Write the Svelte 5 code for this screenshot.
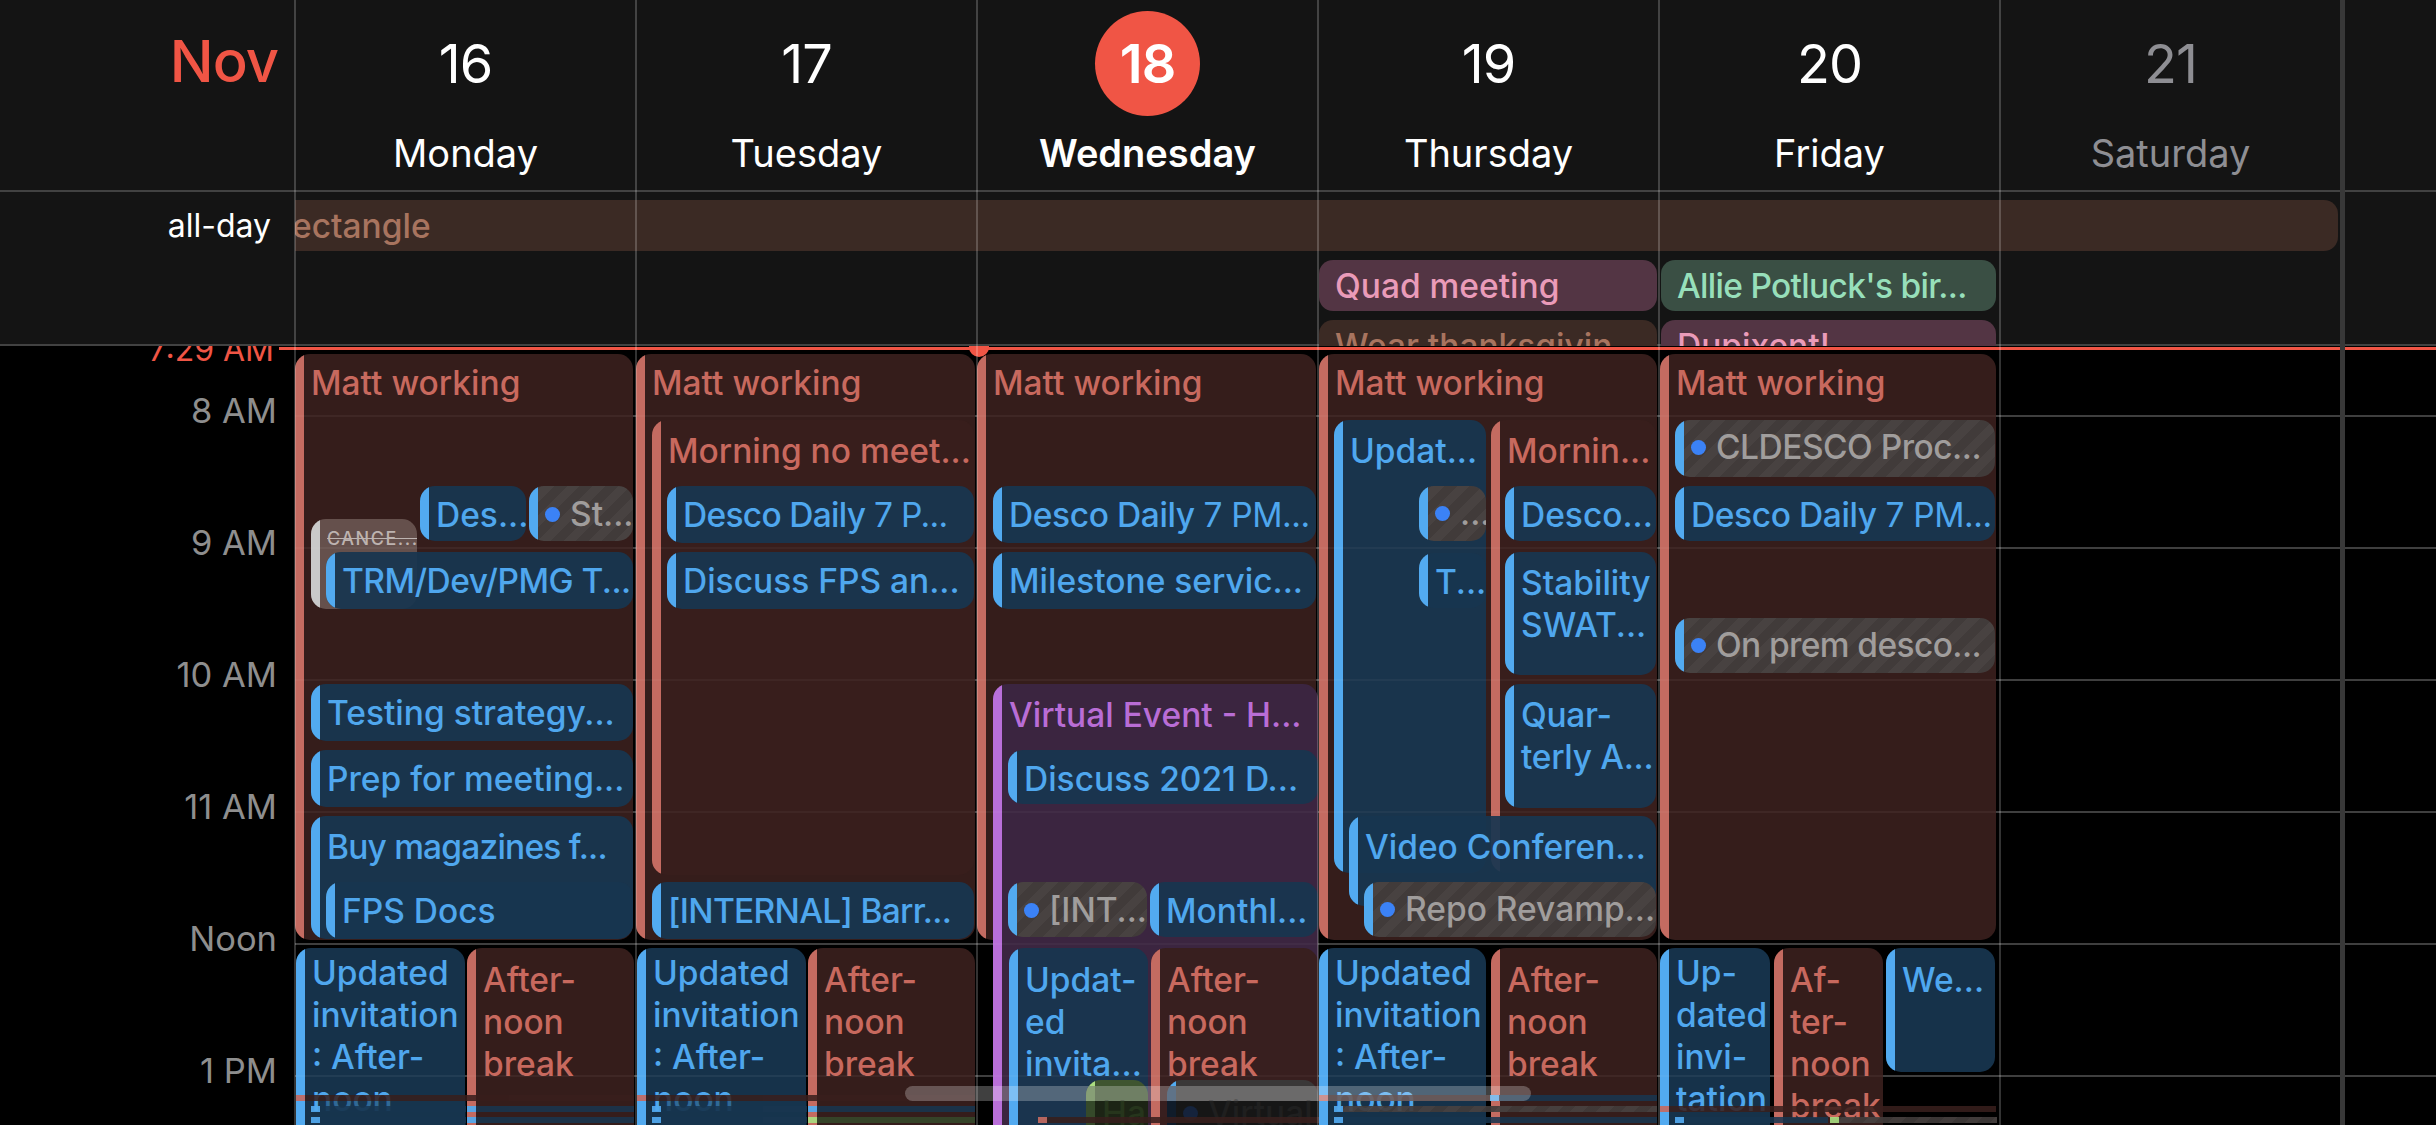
<script>
	const days = [
		{ num: 16, name: "Monday" },
		{ num: 17, name: "Tuesday" },
		{ num: 18, name: "Wednesday", today: true },
		{ num: 19, name: "Thursday" },
		{ num: 20, name: "Friday" },
		{ num: 21, name: "Saturday", off: true },
	]

	const hours = ["8 AM", "9 AM", "10 AM", "11 AM", "Noon", "1 PM"]

	// x, y, right edge, bottom edge are screen pixels; top of the scroller is 346
	const events = [
		// Monday
		{ c: "red", x: 295, y: 354, r: 633, b: 940, t: "Matt working", p: 8 },
		{ c: "blue", x: 420, y: 486, r: 526, b: 541, t: "Des..." },
		{ c: "gray", x: 529, y: 486, r: 633, b: 541, t: "St...", p: 7 },
		{ c: "cancelled", x: 311, y: 519, r: 417, b: 609, t: "CANCE..." },
		{ c: "blue", x: 326, y: 552, r: 633, b: 609, t: "TRM/Dev/PMG T...", ls: -0.5 },
		{ c: "blue", x: 311, y: 684, r: 633, b: 741, t: "Testing strategy..." },
		{ c: "blue", x: 311, y: 750, r: 633, b: 807, t: "Prep for meeting..." },
		{ c: "blue", x: 311, y: 816, r: 633, b: 939, t: "Buy magazines f...", p: 10, ls: -0.8 },
		{ c: "blue", x: 326, y: 882, r: 633, b: 939, t: "FPS Docs" },
		{ c: "blue", x: 296, y: 948, r: 465, b: 1160, t: "Updated\ninvitation\n: After-\nnoon", p: 4 },
		{ c: "red", x: 467, y: 948, r: 634, b: 1160, t: "After-\nnoon\nbreak", p: 11 },

		// Tuesday
		{ c: "red", x: 636, y: 354, r: 975, b: 940, t: "Matt working", p: 8 },
		{ c: "red", x: 652, y: 420, r: 974, b: 875, t: "Morning no meet...", p: 10 },
		{ c: "blue", x: 667, y: 486, r: 974, b: 543, t: "Desco Daily", sub: " 7 P...", ls: -0.7 },
		{ c: "blue", x: 667, y: 552, r: 974, b: 609, t: "Discuss FPS an..." },
		{ c: "blue", x: 652, y: 882, r: 974, b: 939, t: "[INTERNAL] Barr...", ls: -0.7 },
		{ c: "blue", x: 637, y: 948, r: 806, b: 1160, t: "Updated\ninvitation\n: After-\nnoon", p: 4 },
		{ c: "red", x: 808, y: 948, r: 975, b: 1160, t: "After-\nnoon\nbreak", p: 11 },

		// Wednesday
		{ c: "red", x: 977, y: 354, r: 1316, b: 940, t: "Matt working", p: 8 },
		{ c: "blue", x: 993, y: 486, r: 1316, b: 543, t: "Desco Daily", sub: " 7 PM...", ls: -0.4 },
		{ c: "blue", x: 993, y: 552, r: 1316, b: 609, t: "Milestone servic..." },
		{ c: "purple", x: 993, y: 684, r: 1318, b: 1160, t: "Virtual Event - H...", p: 10 },
		{ c: "blue", x: 1008, y: 750, r: 1318, b: 804, t: "Discuss 2021 D..." },
		{ c: "gray", x: 1008, y: 882, r: 1147, b: 937, t: "[INT...", p: 7 },
		{ c: "blue", x: 1150, y: 882, r: 1318, b: 937, t: "Monthl..." },
		{ c: "blue", x: 1009, y: 948, r: 1148, b: 1160, t: "Updat-\ned\ninvita...", p: 11 },
		{ c: "red", x: 1151, y: 948, r: 1318, b: 1160, t: "After-\nnoon\nbreak", p: 11 },
		{ c: "dimgreen", x: 1086, y: 1080, r: 1148, b: 1160, t: "Ha", p: 12 },
		{ c: "dimgray", x: 1167, y: 1080, r: 1318, b: 1160, t: "Virtual", p: 12 },

		// Thursday
		{ c: "red", x: 1319, y: 354, r: 1657, b: 940, t: "Matt working", p: 8 },
		{ c: "blue", x: 1334, y: 420, r: 1486, b: 873, t: "Updat...", p: 10 },
		{ c: "gray", x: 1419, y: 486, r: 1486, b: 541, t: "..." },
		{ c: "blue", x: 1419, y: 553, r: 1486, b: 608, t: "T..." },
		{ c: "red", x: 1491, y: 420, r: 1656, b: 873, t: "Mornin...", p: 10 },
		{ c: "blue", x: 1505, y: 486, r: 1656, b: 541, t: "Desco..." },
		{ c: "blue", x: 1505, y: 552, r: 1656, b: 675, t: "Stability\nSWAT...", p: 10 },
		{ c: "blue", x: 1505, y: 684, r: 1656, b: 808, t: "Quar-\nterly A...", p: 10, ls: -0.3 },
		{ c: "blue", x: 1349, y: 816, r: 1656, b: 906, t: "Video Conferen...", p: 10 },
		{ c: "gray", x: 1364, y: 882, r: 1656, b: 937, t: "Repo Revamp..." },
		{ c: "blue", x: 1319, y: 948, r: 1486, b: 1160, t: "Updated\ninvitation\n: After-\nnoon", p: 4 },
		{ c: "red", x: 1491, y: 948, r: 1657, b: 1160, t: "After-\nnoon\nbreak", p: 11 },

		// Friday
		{ c: "red", x: 1660, y: 354, r: 1996, b: 940, t: "Matt working", p: 8 },
		{ c: "gray", x: 1675, y: 420, r: 1995, b: 477, t: "CLDESCO Proc...", ls: -0.5 },
		{ c: "blue", x: 1675, y: 486, r: 1995, b: 541, t: "Desco Daily", sub: " 7 PM...", ls: -0.4 },
		{ c: "gray", x: 1675, y: 618, r: 1995, b: 673, t: "On prem desco...", ls: -0.6 },
		{ c: "blue", x: 1660, y: 948, r: 1770, b: 1160, t: "Up-\ndated\ninvi-\ntation", p: 4 },
		{ c: "red", x: 1774, y: 948, r: 1883, b: 1160, t: "Af-\nter-\nnoon\nbreak", p: 11 },
		{ c: "blue", x: 1886, y: 948, r: 1995, b: 1072, t: "We...", p: 11 },
	]

	// thin slivers of the events stacked further down, peeking under the fold
	const slivers = [
		{ c: "blue", x: 320, y: 1101, r: 466, b: 1125, veil: true },
		{ c: "blue", x: 661, y: 1101, r: 807, b: 1125, veil: true },
		{ c: "red", x: 296, y: 1095, r: 634 },
		{ c: "blue", x: 311, y: 1106, r: 466 },
		{ c: "blue", x: 467, y: 1106, r: 634 },
		{ c: "blue", x: 311, y: 1117, r: 466 },
		{ c: "blue", x: 467, y: 1117, r: 634 },
		{ c: "red", x: 637, y: 1095, r: 975 },
		{ c: "blue", x: 652, y: 1106, r: 807 },
		{ c: "blue", x: 808, y: 1106, r: 975 },
		{ c: "blue", x: 652, y: 1117, r: 807 },
		{ c: "lime", x: 808, y: 1117, r: 975 },
		{ c: "red", x: 1038, y: 1117, r: 1319 },
		{ c: "red", x: 1319, y: 1095, r: 1490 },
		{ c: "blue", x: 1490, y: 1095, r: 1657 },
		{ c: "gray", x: 1334, y: 1106, r: 1657 },
		{ c: "blue", x: 1334, y: 1117, r: 1657 },
		{ c: "red", x: 1660, y: 1106, r: 1996 },
		{ c: "blue", x: 1675, y: 1117, r: 1828 },
		{ c: "lime-gray", x: 1830, y: 1117, r: 1997 },
	]

	const place = (e) =>
		`left:${e.x}px;top:${e.y - 346}px;width:${e.r - e.x}px;height:${(e.b ?? e.y + 6) - e.y}px`
</script>

<div class="cal">
	<header class="head">
		<div class="month">Nov</div>
		{#each days as d}
			<div class="day" class:off={d.off} class:today={d.today}>
				<div class="num"><span>{d.num}</span></div>
				<div class="name">{d.name}</div>
			</div>
		{/each}
	</header>

	<section class="allday">
		<div class="allday-label">all-day</div>
		<div class="pill rect"><span>ectangle</span></div>
		<div class="pill pink quad">Quad meeting</div>
		<div class="pill mint allie">Allie Potluck's bir...</div>
		<div class="pill brown wear">Wear thanksgivin</div>
		<div class="pill pink dupi">Dupixent!</div>
	</section>

	<main class="scroller">
		<div class="now-label">7:29 AM</div>

		<div class="hours">
			{#each hours as h}
				<div class="hour">
					<span>{h}</span>
				</div>
			{/each}
		</div>

		{#each events as e}
			<div class="ev {e.c}" style={place(e)}>
				<div class="txt" style="padding-top:{e.p ?? (e.c === 'gray' ? 6 : 8)}px;letter-spacing:{e.ls ?? 0}px">
					{#if e.c === "gray" || e.c === "dimgray"}<i class="dot"></i>{/if}{e.t}{#if e.sub}<span class="sub">{e.sub}</span>{/if}
				</div>
			</div>
		{/each}

		{#each slivers as s}
			<div class="sliver {s.c}" class:veil={s.veil} style={place(s)}></div>
		{/each}

		<div class="hour-ghosts">
			{#each hours as h}
				<div></div>
			{/each}
		</div>

		<div class="now-line"></div>
		<div class="now-dot"></div>
		<div class="scrollbar"></div>
	</main>

	<div class="vlines">
		{#each days as d}
			<div></div>
		{/each}
	</div>
	<div class="divider"></div>
</div>

<style>
	:global(body) {
		margin: 0;
		background: #000;
	}

	.cal {
		position: relative;
		width: 2436px;
		height: 1125px;
		overflow: hidden;
		display: flex;
		flex-direction: column;
		background: #000;
		font-family: Inter, "Liberation Sans", sans-serif;
		color: #fff;
	}

	.head {
		height: 190px;
		flex: none;
		display: grid;
		grid-template-columns: 295px repeat(6, 341px);
		background: #141414;
		border-bottom: 2px solid #424242;
	}

	.month {
		padding: 27px 17px 0 0;
		text-align: right;
		font-size: 58px;
		line-height: 68px;
		font-weight: 500;
		letter-spacing: -1px;
		color: #f05545;
	}

	.day {
		display: flex;
		flex-direction: column;
		align-items: center;
		padding-top: 11px;
	}

	.num {
		width: 105px;
		height: 105px;
		border-radius: 50%;
		display: flex;
		align-items: center;
		justify-content: center;
		font-size: 54px;
		font-weight: 400;
		letter-spacing: -1px;
	}

	.name {
		margin-top: 16px;
		font-size: 38px;
		line-height: 42px;
		font-weight: 400;
	}

	.today .num {
		background: #f05545;
		font-weight: 600;
	}

	.today .name {
		font-weight: 600;
	}

	.off {
		color: #8e8e93;
	}

	.allday {
		height: 146px;
		flex: none;
		padding-top: 8px;
		overflow: hidden;
		display: grid;
		grid-template-columns: 295px repeat(6, 341px);
		grid-template-rows: 51px 51px 51px;
		row-gap: 9px;
		background: #141414;
		box-shadow: inset 0 -2px 0 #424242;
	}

	.allday-label {
		grid-column: 1;
		grid-row: 1;
		align-self: center;
		text-align: right;
		padding-right: 24px;
		font-size: 32px;
		font-weight: 400;
	}

	.pill {
		border-radius: 14px;
		padding-left: 16px;
		font-size: 33.5px;
		line-height: 53px;
		font-weight: 500;
		white-space: nowrap;
		overflow: hidden;
	}

	.rect {
		grid-column: 2 / 8;
		grid-row: 1;
		margin-right: 3px;
		padding-left: 0;
		text-indent: -3px;
		border-radius: 0 14px 14px 0;
		background: #3b2a24;
		color: #a8745f;
	}

	.quad {
		grid-column: 5;
		grid-row: 2;
		margin: 0 2px 0 1px;
	}

	.allie {
		grid-column: 6;
		grid-row: 2;
		margin: 0 4px 0 2px;
		letter-spacing: -0.7px;
	}

	.wear {
		grid-column: 5;
		grid-row: 3;
		margin: 0 2px 0 1px;
	}

	.dupi {
		grid-column: 6;
		grid-row: 3;
		margin: 0 4px 0 2px;
	}

	.pink {
		background: #533544;
		color: #ea9bb9;
	}

	.mint {
		background: #3a4f44;
		color: #97dfba;
	}

	.brown {
		background: #3b2a24;
		color: #a8745f;
	}

	.scroller {
		position: relative;
		flex: 1;
		overflow: hidden;
		z-index: 0;
	}

	.hours {
		padding-top: 69px;
	}

	.hour {
		height: 132px;
		box-sizing: border-box;
		margin-left: 295px;
		border-top: 2px solid #393939;
		position: relative;
	}

	.hour span {
		position: absolute;
		right: calc(100% + 18px);
		top: -27px;
		font-size: 34.5px;
		line-height: 42px;
		white-space: nowrap;
		color: #8e8e8e;
	}

	.hour-ghosts {
		position: absolute;
		left: 295px;
		right: 0;
		top: 69px;
		z-index: 3;
		pointer-events: none;
	}

	.hour-ghosts div {
		height: 132px;
		box-sizing: border-box;
		border-top: 2px solid rgba(255, 255, 255, 0.035);
	}

	.now-label {
		position: absolute;
		right: calc(100% - 274px);
		top: -14px;
		font-size: 32px;
		line-height: 36px;
		white-space: nowrap;
		color: #f05545;
	}

	.now-line {
		position: absolute;
		left: 279px;
		right: 0;
		top: 1px;
		height: 3px;
		background: #f05545;
		z-index: 4;
	}

	.now-dot {
		position: absolute;
		left: 969px;
		top: -9px;
		width: 20px;
		height: 20px;
		border-radius: 50%;
		background: #f05545;
		z-index: 4;
	}

	.scrollbar {
		position: absolute;
		left: 905px;
		top: 740px;
		width: 626px;
		height: 15px;
		border-radius: 8px;
		background: rgba(255, 255, 255, 0.25);
		z-index: 5;
	}

	.ev {
		position: absolute;
		overflow: hidden;
		border-radius: 15px;
		z-index: 1;
	}

	.ev::before {
		content: "";
		position: absolute;
		left: 0;
		top: 0;
		bottom: 0;
		width: 9px;
		background: var(--strip);
	}

	.txt {
		padding-left: 16px;
		font-size: 33.5px;
		line-height: 42px;
		font-weight: 500;
		white-space: pre;
		color: var(--ink);
	}

	.sub {
		font-weight: 400;
	}

	.red {
		--strip: #c46b61;
		--ink: #c8695e;
		background: rgba(56, 31, 29, 0.94);
	}

	.blue {
		--strip: #52aaf0;
		--ink: #4fa7ee;
		background: rgba(24, 54, 80, 0.93);
	}

	.purple {
		--strip: #b96fd9;
		--ink: #b96dd6;
		background: #3b2540;
	}

	.gray {
		--strip: #52aaf0;
		--ink: #a09d9c;
		background: repeating-linear-gradient(135deg, #413b3a 0 9px, #484241 9px 18px);
	}

	.dot {
		display: inline-block;
		width: 15px;
		height: 15px;
		margin-right: 10px;
		border-radius: 50%;
		background: #3b82f6;
		vertical-align: 4px;
	}

	.cancelled {
		--strip: #c9c9c9;
		--ink: #bdb3b0;
		background: rgba(150, 132, 126, 0.5);
	}

	.cancelled .txt {
		font-size: 18px;
		line-height: 24px;
		letter-spacing: 1.5px !important;
		text-decoration: line-through;
	}

	.dimgreen {
		--strip: linear-gradient(#a9dc80 0 6px, #5f7f48 6px 21px, #35492a 21px);
		--ink: #26351c;
		background: linear-gradient(#3f5530 0 21px, #1c2415 21px);
	}

	.dimgray {
		--strip: linear-gradient(#52aaf0 0 6px, #2a4460 6px 21px, #101c2a 21px);
		--ink: #1f1f1f;
		background: linear-gradient(#3a3838 0 21px, #161616 21px);
	}

	.dimgray .dot {
		background: #15233c;
	}

	.sliver {
		position: absolute;
		overflow: hidden;
		z-index: 2;
		opacity: 0.92;
	}

	.sliver::before {
		content: "";
		position: absolute;
		left: 0;
		top: 0;
		bottom: 0;
		width: 9px;
		background: var(--strip);
	}

	.veil {
		background: rgba(24, 54, 80, 0.6);
	}

	.veil::before {
		display: none;
	}

	.lime {
		--strip: #a9dc80;
		background: #36472a;
	}

	.lime-gray {
		--strip: #a9dc80;
		background: repeating-linear-gradient(135deg, #413b3a 0 9px, #484241 9px 18px);
	}

	.vlines {
		position: absolute;
		left: 294px;
		top: 0;
		bottom: 0;
		display: flex;
		pointer-events: none;
		z-index: 6;
	}

	.vlines div {
		width: 341px;
		box-sizing: border-box;
		border-left: 2px solid rgba(255, 255, 255, 0.2);
	}

	.divider {
		position: absolute;
		left: 2340px;
		top: 0;
		bottom: 0;
		width: 5px;
		background: #383838;
		z-index: 7;
	}
</style>
